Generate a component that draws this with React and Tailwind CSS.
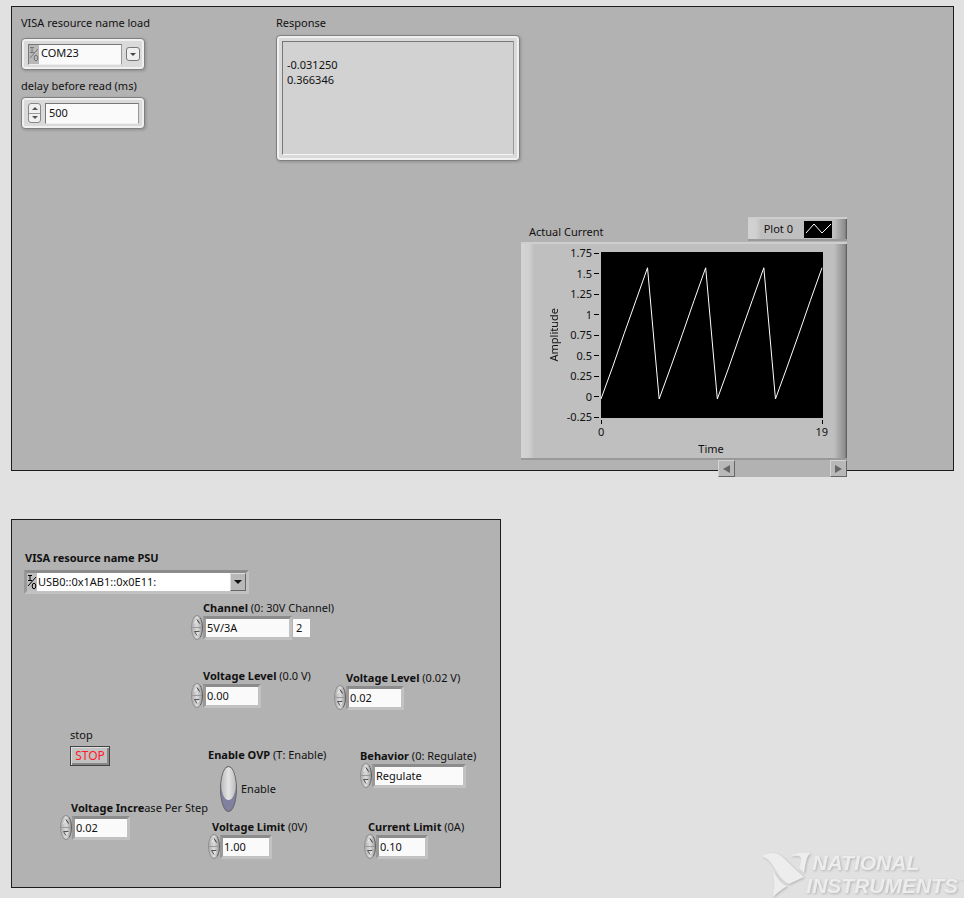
import React, { useState } from 'react';

const yTicks = ['1.75', '1.5', '1.25', '1', '0.75', '0.5', '0.25', '0', '-0.25'];

const currentSamples = [
  -0.03, 0.36, 0.77, 1.17, 1.57,
  -0.03, 0.36, 0.76, 1.17, 1.57,
  -0.03, 0.36, 0.77, 1.17, 1.57,
  -0.03, 0.36, 0.76, 1.17, 1.57
];

const toPoints = samples =>
  samples
    .map((value, i) => `${(i * 221) / 19},${((1.75 - value) * 164) / 2 + 1}`)
    .join(' ');

const IoIcon = () => (
  <svg viewBox="0 0 10 16" className="w-[10px] h-4 shrink-0" fill="none" stroke="currentColor" aria-hidden="true">
    <path d="M1 1.5h4M3 1.5v5M1 6.5h4M9 3L1 12" />
    <ellipse cx="7" cy="12" rx="1.8" ry="2.8" />
  </svg>
);

const Triangle = ({ down, className }) => (
  <svg viewBox="0 0 8 4" className={className} fill="currentColor" aria-hidden="true">
    <path d={down ? 'M0 0h8L4 4z' : 'M0 4h8L4 0z'} />
  </svg>
);

// silver frame used by the controls in the load panel
const SilverFrame = ({ className, children }) => (
  <div className={`rounded border border-[#808080] bg-[#dadada] shadow-[1px_1px_3px_rgba(0,0,0,0.2),inset_0_0_0_2px_#f0f0f0] ${className}`}>
    {children}
  </div>
);

const Spinner = ({ label, onStep }) => (
  <div className="flex flex-col w-3 h-[25px] shrink-0 rounded-[50%] overflow-hidden border border-[#909090] border-r-[#606060] bg-[linear-gradient(to_right,#b0b0b0,#dcdcdc,#a0a0a0)]">
    <button type="button" aria-label={`Increase ${label}`} onClick={() => onStep(1)} className="flex-1 flex items-center justify-center border-b border-[#999]">
      <svg viewBox="0 0 6 5" className="w-[6px] h-[5px]" fill="none" aria-hidden="true">
        <path d="M0.5 4.5L3 0.5" stroke="#eee" />
        <path d="M3 0.5L5.5 4.5" stroke="#333" />
      </svg>
    </button>
    <button type="button" aria-label={`Decrease ${label}`} onClick={() => onStep(-1)} className="flex-1 flex items-center justify-center">
      <svg viewBox="0 0 6 5" className="w-[6px] h-[5px]" fill="none" aria-hidden="true">
        <path d="M5.5 0.5L3 4.5" stroke="#eee" />
        <path d="M5.5 0.5H0.5L3 4.5" stroke="#555" />
      </svg>
    </button>
  </div>
);

const ClassicControl = ({ id, name, hint, initial, step, options, labelClass = 'pl-3', fieldClass, children }) => {
  const [value, setValue] = useState(initial);

  const handleStep = dir => {
    if (options) {
      const next = (options.indexOf(value) + dir + options.length) % options.length;
      setValue(options[next]);
      return;
    }
    setValue((parseFloat(value) + dir * step).toFixed(2));
  };

  return (
    <div>
      <label htmlFor={id} className={`block whitespace-nowrap ${labelClass}`}>
        <b>{name}</b>{hint}
      </label>
      <div className="flex items-center -mt-[2px]">
        <Spinner label={name} onStep={handleStep} />
        <input
          id={id}
          value={value}
          onChange={e => setValue(e.target.value)}
          className={`h-6 mt-[2px] pl-px pb-px border-[3px] border-t-[#8c8c8c] border-l-[#999] border-b-[#c2c2c2] border-r-[#c2c2c2] bg-[#fafafa] outline-none ${fieldClass}`}
        />
        {children}
      </div>
    </div>
  );
};

const CurrentChart = () => (
  <div className="w-[326px]">
    <div className="flex justify-between items-end">
      <h2 className="pl-2 pb-[2px]">Actual Current</h2>
      <div className="flex items-center justify-end gap-[11px] w-[99px] h-6 pr-[15px] mb-px border-t-2 border-b-2 border-t-[#cecece] border-b-[#999] bg-[linear-gradient(to_right,#d2d2d2_0px,#d0d0d0_8px,#bfbfbf_13px,#bfbfbf_86px,#8c8c8c_97px,#555_99px)]">
        <span>Plot 0</span>
        <svg viewBox="0 0 28 17" className="w-7 h-[17px] bg-black" fill="none" stroke="#fff" aria-hidden="true">
          <path d="M2 12L10 3L18 12L27 3" />
        </svg>
      </div>
    </div>

    <div className="flex border-t-2 border-b-2 border-t-[#cecece] border-b-[#999] pt-[3px] h-[218px] bg-[linear-gradient(to_right,#d4d4d4_0px,#d0d0d0_8px,#bfbfbf_13px,#bfbfbf_313px,#8c8c8c_324px,#555_326px)]">
      <div className="w-[42px] h-[176px] flex items-center justify-end pr-px">
        <span className="[writing-mode:vertical-rl] rotate-180 leading-4">Amplitude</span>
      </div>
      <div className="w-[36px] h-[176px] flex flex-col justify-between">
        {yTicks.map(tick => (
          <div key={tick} className="flex items-center justify-end gap-[2px] leading-3">
            {tick}
            <span className="w-[5px] h-px bg-black" />
          </div>
        ))}
      </div>
      <div className="w-[224px] pt-[5px]">
        <svg viewBox="0 0 222 166" className="block ml-[2px] w-[222px] h-[166px] bg-black" fill="none" role="img" aria-label="Actual current over time">
          <polyline points={toPoints(currentSamples)} stroke="#fff" strokeWidth="1" />
        </svg>
        <div className="flex justify-between ml-[2px] mt-[2px] h-1">
          <span className="w-px bg-black" />
          <span className="w-px bg-black" />
        </div>
        <div className="flex justify-between leading-4 -ml-px -mr-[5px]">
          <span>0</span>
          <span>19</span>
        </div>
        <div className="text-center leading-[18px]">Time</div>
      </div>
    </div>

    <div className="flex justify-between w-[129px] h-[17px] ml-auto bg-[#b2b2b2]">
      <button type="button" aria-label="Scroll left" className="w-[17px] h-[17px] flex items-center justify-center bg-[#b8b8b8] border border-[#d4d4d4] border-r-[#666] border-b-[#666] text-[#666]">
        <svg viewBox="0 0 7 8" className="w-[7px] h-2" fill="currentColor" aria-hidden="true"><path d="M7 0v8L0 4z" /></svg>
      </button>
      <button type="button" aria-label="Scroll right" className="w-[17px] h-[17px] flex items-center justify-center bg-[#b8b8b8] border border-[#d4d4d4] border-r-[#666] border-b-[#666] text-[#666]">
        <svg viewBox="0 0 7 8" className="w-[7px] h-2" fill="currentColor" aria-hidden="true"><path d="M0 0v8l7-4z" /></svg>
      </button>
    </div>
  </div>
);

const LoadPanel = () => {
  const [delay, setDelay] = useState('500');
  const stepDelay = dir => setDelay(String(Number(delay) + dir));

  return (
    <section className="border border-[#1c1c1c] bg-[#b2b2b2] mr-[10px]">
      <div className="flex gap-[131px] pt-2 pl-[9px]">
        <div className="w-[124px] shrink-0">
          <label htmlFor="visa-load" className="block whitespace-nowrap">VISA resource name load</label>
          <SilverFrame className="mt-[7px] h-8 flex items-center pl-[6px] pr-1 gap-1">
            <div className="flex flex-1 h-[21px] border border-[#777] border-r-[#999] border-b-[#eee] bg-[#fafafa]">
              <span className="flex items-center bg-[#b8b8b8] text-[#777]"><IoIcon /></span>
              <select id="visa-load" className="flex-1 min-w-0 appearance-none bg-transparent pl-[2px] pb-[2px] outline-none">
                <option>COM23</option>
              </select>
            </div>
            <span className="w-[14px] h-[14px] flex items-center justify-center rounded-[3px] border border-[#777] bg-[#f0f0f0] text-[#444]">
              <Triangle down className="w-[6px] h-[3px]" />
            </span>
          </SilverFrame>

          <label htmlFor="delay" className="block whitespace-nowrap mt-2">delay before read (ms)</label>
          <SilverFrame className="mt-[3px] h-8 flex items-center pl-[6px] pr-[5px] gap-1">
            <div className="flex flex-col w-[13px] h-5 rounded-[3px] border border-[#888] bg-[#f0f0f0] text-[#555]">
              <button type="button" aria-label="Increase delay" onClick={() => stepDelay(1)} className="flex-1 flex items-center justify-center border-b border-[#999]">
                <Triangle className="w-[6px] h-[3px]" />
              </button>
              <button type="button" aria-label="Decrease delay" onClick={() => stepDelay(-1)} className="flex-1 flex items-center justify-center">
                <Triangle down className="w-[6px] h-[3px]" />
              </button>
            </div>
            <input id="delay" value={delay} onChange={e => setDelay(e.target.value)} className="flex-1 min-w-0 h-[21px] pl-[3px] pb-px border border-[#777] border-r-[#999] border-b-[#eee] bg-[#fafafa] outline-none" />
          </SilverFrame>
        </div>

        <div className="w-[244px] shrink-0">
          <label htmlFor="response" className="block">Response</label>
          <SilverFrame className="mt-1 h-[126px] p-[5px]">
            <textarea
              id="response"
              readOnly
              value={'\n-0.031250\n0.366346'}
              className="block w-full h-full resize-none overflow-hidden border border-[#777] border-r-[#999] border-b-[#f6f6f6] bg-[#d2d2d2] pl-1 leading-[15px] outline-none"
            />
          </SilverFrame>
        </div>
      </div>

      <div className="pl-[509px] mt-[56px] -mb-[7px]">
        <CurrentChart />
      </div>
    </section>
  );
};

const PsuPanel = () => {
  const [ovp, setOvp] = useState(true);

  return (
    <section className="w-[490px] border border-[#1c1c1c] bg-[#b2b2b2] pt-[30px] pb-7">
      <div className="pl-3">
        <label htmlFor="visa-psu" className="block pl-px font-bold">VISA resource name PSU</label>
        <div className="flex w-[225px] h-6 mt-1 border-[3px] border-t-[#8c8c8c] border-l-[#999] border-b-[#c2c2c2] border-r-[#c2c2c2] bg-white">
          <span className="flex items-center bg-[#bebebe] text-black"><IoIcon /></span>
          <select id="visa-psu" className="flex-1 appearance-none pl-px outline-none">
            <option>USB0::0x1AB1::0x0E11:</option>
          </select>
          <span className="pointer-events-none w-4 h-[18px] flex items-center justify-center bg-[#b8b8b8] border border-[#ddd] border-r-[#666] border-b-[#666]">
            <Triangle down className="w-2 h-1" />
          </span>
        </div>
      </div>

      <div className="pl-[179px] mt-[6px]">
        <ClassicControl id="channel" name="Channel" hint=" (0: 30V Channel)" initial="5V/3A" options={['5V/3A', '30V/3A']} fieldClass="w-[89px]">
          <output htmlFor="channel" className="ml-px mt-[2px] w-[17px] h-[18px] bg-[#fafafa] pl-[3px] leading-[18px]">2</output>
        </ClassicControl>
      </div>

      <div className="flex items-start pl-[179px] mt-7">
        <div className="w-[143px]">
          <ClassicControl id="level-now" name="Voltage Level" hint=" (0.0 V)" initial="0.00" step={0.01} fieldClass="w-[58px]" />
        </div>
        <div className="pt-[2px]">
          <ClassicControl id="level-next" name="Voltage Level" hint=" (0.02 V)" initial="0.02" step={0.01} fieldClass="w-[58px]" />
        </div>
      </div>

      <div className="flex items-start pl-12 mt-[17px]">
        <div className="w-[148px]">
          <div className="pl-[10px]">
            <label htmlFor="stop" className="block">stop</label>
            <button id="stop" type="button" className="block mt-[3px] w-10 h-5 border border-[#444] bg-[#c2c2c2] text-[#ff1a28] text-[12px] leading-4 shadow-[inset_1px_1px_0_#ddd,inset_-2px_-2px_0_#888]">STOP</button>
          </div>
          <div className="mt-[34px]">
            <ClassicControl id="increase" name="Voltage Incre" hint="ase Per Step" initial="0.02" step={0.01} labelClass="pl-[11px]" fieldClass="w-[58px]" />
          </div>
        </div>

        <div className="w-[152px] pt-5">
          <label htmlFor="ovp" className="block whitespace-nowrap"><b>Enable OVP</b> (T: Enable)</label>
          <div className="flex items-center gap-1 pl-3 mt-[3px]">
            <span className="w-[17px] h-[46px] rounded-[50%] border border-[#666] bg-[#8080a0] overflow-hidden">
              <input
                id="ovp"
                type="checkbox"
                role="switch"
                checked={ovp}
                onChange={e => setOvp(e.target.checked)}
                className="block appearance-none w-[15px] h-[33px] rounded-[50%] bg-[linear-gradient(to_right,#bbb,#e4e4e4,#bbb)] mt-[11px] checked:mt-0"
              />
            </span>
            <span>{ovp ? 'Enable' : 'Disable'}</span>
          </div>
          <div className="mt-[7px]">
            <ClassicControl id="v-limit" name="Voltage Limit" hint=" (0V)" initial="1.00" step={0.1} labelClass="pl-1" fieldClass="w-[52px]" />
          </div>
        </div>

        <div className="pt-[21px]">
          <ClassicControl id="behavior" name="Behavior" hint=" (0: Regulate)" initial="Regulate" options={['Regulate', 'Trip']} labelClass="" fieldClass="w-[94px]" />
          <div className="mt-[31px] pl-1">
            <ClassicControl id="c-limit" name="Current Limit" hint=" (0A)" initial="0.10" step={0.01} labelClass="pl-1" fieldClass="w-[52px]" />
          </div>
        </div>
      </div>
    </section>
  );
};

const Logo = () => (
  <div className="flex items-end text-[#ededed] drop-shadow-[1px_1px_1px_#b4b4b4]">
    <svg viewBox="0 0 50 48" className="w-[50px] h-12 -mr-[6px]" fill="currentColor" aria-hidden="true">
      <path d="M0 7C5 4 11 3 16 5C22 8 31 19 42 28L27 35C20 32 17 26 13 20C9 13 6 10 0 7z" />
      <path d="M28 8C33 3 42 3 49 4C44 7 44 14 42 24L37 19C39 14 40 9 38 8C35 6 31 7 28 8z" />
      <path d="M11 22C15 28 19 35 25 37C20 40 15 44 11 48C11 43 13 39 12 34z" />
    </svg>
    <div className="font-['Liberation_Sans',sans-serif] font-bold italic text-[21px] leading-[23px]">
      <div className="pl-[6px]">NATIONAL</div>
      <div className="flex">INSTRUMENTS<span className="text-[6px] leading-3">™</span></div>
    </div>
  </div>
);

const App = () => (
  <main className="min-h-screen bg-[#e1e1e1] pl-[11px] pt-[6px] font-['Noto_Sans','Open_Sans',sans-serif] text-[11px] leading-4 text-[#111]">
    <LoadPanel />
    <div className="flex flex-wrap items-end justify-between mt-12">
      <div className="pb-[9px]">
        <PsuPanel />
      </div>
      <Logo />
    </div>
  </main>
);

export default App;
